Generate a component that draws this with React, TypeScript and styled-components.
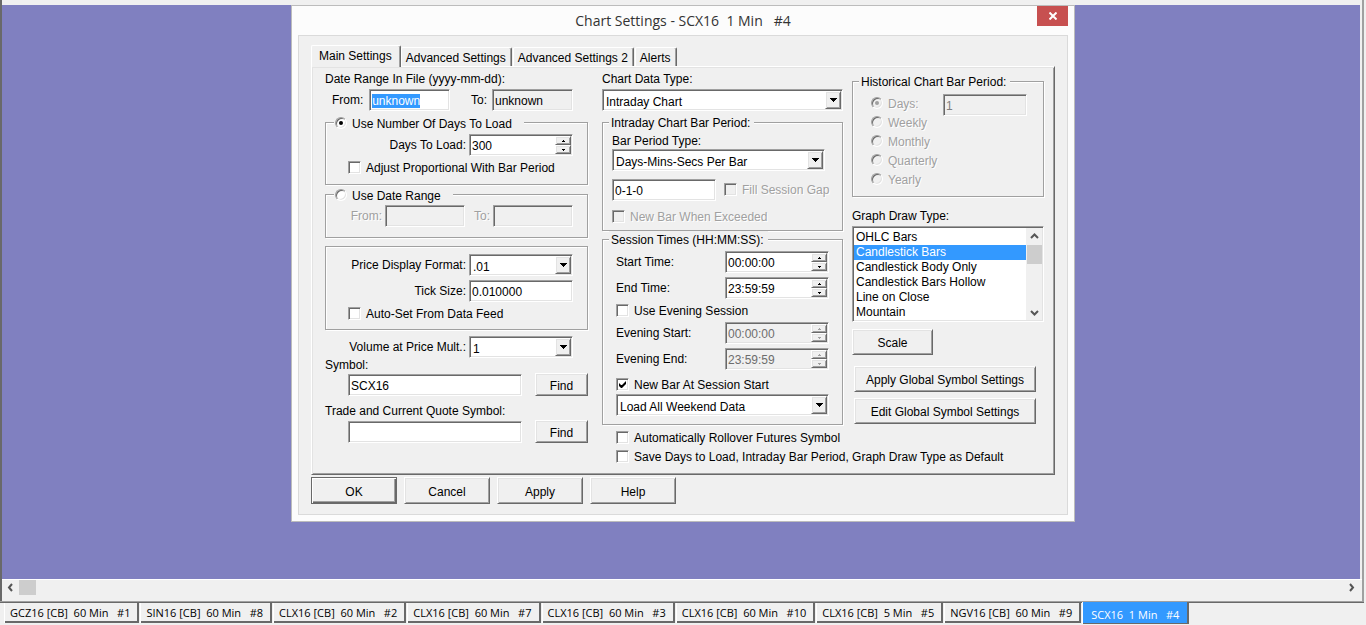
import React, { useEffect, useRef } from "react";
import styled, { createGlobalStyle, css } from "styled-components";

const face = "#f0f0f0";
const shade = "#a0a0a0";
const dark = "#696969";
const lite = "#e3e3e3";
const accent = "#3399ff";

const GlobalStyle = createGlobalStyle`
  *, *::before, *::after { box-sizing: border-box; }
  html, body { margin: 0; padding: 0; background: ${face}; }
  body, button, input, select {
    font-family: "Liberation Sans", Arial, sans-serif;
    font-size: 12px;
    line-height: 14px;
    color: #000;
  }
  ::selection { background: ${accent}; color: #fff; }
`;

const sunken = css`
  border: 1px solid;
  border-color: ${shade} #fff #fff ${shade};
  box-shadow: inset 1px 1px ${dark}, inset -1px -1px ${lite};
`;

const raised = css`
  border: 1px solid;
  border-color: #fff ${dark} ${dark} #fff;
  box-shadow: inset 1px 1px ${lite}, inset -1px -1px ${shade};
`;

const engraved = css`
  color: ${shade};
  text-shadow: 1px 1px #fff;
`;

/* Application frame */

const Frame = styled.div`
  display: flex;
  flex-direction: column;
  min-height: 100vh;
  background: ${face};
`;

const Client = styled.div`
  flex: 1;
  display: flex;
  flex-direction: column;
  margin-right: 2px;
  border-left: 2px solid ${dark};
  border-right: 2px solid ${shade};
`;

const Workspace = styled.main`
  flex: 1;
  display: flex;
  justify-content: center;
  align-items: flex-start;
  margin-top: 5px;
  margin-right: 2px;
  padding: 0 0 56px 4px;
  background: #8080c0;
`;

const ScrollStrip = styled.div`
  display: flex;
  align-items: center;
  height: 23px;
  padding: 0 6px 7px 4px;
  border-top: 1px solid #fff;
`;

const ScrollArrow = styled.button`
  display: flex;
  align-items: center;
  justify-content: center;
  width: 9px;
  height: 15px;
  padding: 0;
  border: 0;
  background: none;
`;

const ScrollThumb = styled.div`
  width: 17px;
  height: 15px;
  margin-left: 4px;
  margin-right: auto;
  background: #cdcdcd;
`;

const TabStrip = styled.nav`
  display: flex;
  align-items: flex-start;
  height: 23px;
  margin-right: 2px;
  padding-left: 5px;
  border-top: 1px solid ${dark};
  box-shadow: 0 -1px ${shade};
`;

const ChartTab = styled.button<{ $active?: boolean }>`
  flex: none;
  height: 20px;
  margin-right: 2px;
  padding: 1px 7px 0 5px;
  border: solid;
  border-width: 0 2px 2px 0;
  border-color: ${face} ${dark} ${dark} #fff;
  background: ${face};
  box-shadow: -1px 0 #fff;
  font-family: "Open Sans", "Noto Sans", sans-serif;
  font-size: 11px;
  line-height: 17px;
  white-space: pre;
  ${(p) =>
    p.$active &&
    css`
      height: 22px;
      margin-top: -1px;
      padding: 4px 8px 0;
      border-width: 0 2px 1px 0;
      background: ${accent};
      color: #fff;
    `}
`;

/* Dialog */

const Dialog = styled.section`
  width: 784px;
  max-width: 100%;
  padding: 0 6px 6px;
  border: 1px solid #bcbcbc;
  background: #fcfcfc;
`;

const TitleBar = styled.header`
  display: grid;
  grid-template-columns: 31px 1fr 31px;
  height: 29px;
`;

const Title = styled.h1`
  grid-column: 2;
  margin: 0;
  font-family: "Open Sans", "Noto Sans", sans-serif;
  font-size: 14px;
  font-weight: 400;
  line-height: 29px;
  text-align: center;
  white-space: pre;
  color: #333;
`;

const CloseButton = styled.button`
  display: flex;
  align-items: center;
  justify-content: center;
  width: 31px;
  height: 20px;
  padding: 0;
  border: 0;
  background: #c75050;
`;

const DialogBody = styled.form`
  padding: 9px 12px 10px;
  border: 1px solid #dadada;
  background: ${face};
`;

const TabList = styled.div`
  display: flex;
  align-items: flex-end;
`;

const Tab = styled.button<{ $active?: boolean }>`
  height: 19px;
  margin-right: 1px;
  padding: 2px 5px 0 4px;
  border: 1px solid;
  border-color: #fff ${dark} transparent #fff;
  border-bottom: 0;
  border-radius: 2px 2px 0 0;
  background: ${face};
  box-shadow: inset -1px 0 ${shade};
  ${(p) =>
    p.$active &&
    css`
      z-index: 1;
      height: 22px;
      margin-bottom: -1px;
      margin-right: 0;
      padding: 0 8px 2px 7px;
    `}
`;

const Panel = styled.div`
  display: grid;
  grid-template-columns: 268px 241px 192px;
  column-gap: 9px;
  padding: 5px 10px 10px 13px;
  ${raised}
`;

const Column = styled.div<{ $wide?: boolean; $tall?: boolean; $indent?: boolean }>`
  display: flex;
  flex-direction: column;
  align-items: stretch;
  grid-row: ${(p) => (p.$tall ? "1 / span 2" : "auto")};
  grid-column: ${(p) => (p.$wide ? "2 / span 2" : "auto")};
  padding-right: ${(p) => (p.$tall ? "5px" : "0")};
  padding-left: ${(p) => (p.$indent ? "14px" : "0")};
`;

const Row = styled.div<{ $top?: number; $left?: number; $right?: number; $align?: string }>`
  display: flex;
  align-items: center;
  justify-content: ${(p) => p.$align || "flex-start"};
  margin-top: ${(p) => p.$top || 0}px;
  padding-left: ${(p) => p.$left || 0}px;
  padding-right: ${(p) => p.$right || 0}px;
`;

const Label = styled.label<{ $top?: number; $gap?: number; $grow?: boolean; $off?: boolean }>`
  flex: ${(p) => (p.$grow ? 1 : "none")};
  margin-top: ${(p) => p.$top || 0}px;
  margin-right: ${(p) => p.$gap || 0}px;
  white-space: nowrap;
  ${(p) => p.$off && engraved}
`;

const Group = styled.fieldset<{ $top?: number }>`
  min-width: 0;
  margin: ${(p) => p.$top || 0}px 0 0;
  padding: 0;
  border: 1px solid ${shade};
  box-shadow: 1px 1px #fff, inset 1px 1px #fff;
`;

const GroupBody = styled.div<{ $pad: string }>`
  padding: ${(p) => p.$pad};
`;

const Legend = styled.legend<{ $radio?: boolean }>`
  margin-left: ${(p) => (p.$radio ? "8px" : "6px")};
  padding: ${(p) => (p.$radio ? "3px 12px 0 1px" : "2px 4px 0 2px")};
  background: ${face};
  line-height: 15px;
  white-space: nowrap;
`;

const TextBox = styled.input<{ $w: number }>`
  width: ${(p) => p.$w}px;
  height: 22px;
  padding: 3px 2px 1px;
  background: ${(p) => (p.disabled || p.readOnly ? face : "#fff")};
  border-radius: 0;
  outline: 0;
  ${sunken}
  &:disabled { color: #808080; }
`;

const TopBox = styled(TextBox)`
  align-self: flex-start;
`;

const ComboFrame = styled.div<{ $w?: number }>`
  position: relative;
  flex: none;
  width: ${(p) => (p.$w ? p.$w + "px" : "100%")};
  height: 22px;
  padding: 1px;
  background: #fff;
  ${sunken}
`;

const ComboSelect = styled.select`
  appearance: none;
  display: block;
  width: 100%;
  height: 18px;
  padding: 3px 18px 0 2px;
  border: 0;
  outline: 0;
  background: transparent;
`;

const ComboArrow = styled.span`
  position: absolute;
  top: 1px;
  right: 1px;
  display: flex;
  align-items: center;
  justify-content: center;
  width: 16px;
  height: 18px;
  background: ${face};
  pointer-events: none;
  ${raised}
`;

const SpinFrame = styled.div<{ $off?: boolean }>`
  display: flex;
  flex: none;
  width: 104px;
  height: 22px;
  padding: 1px;
  background: ${(p) => (p.$off ? face : "#fff")};
  ${sunken}
`;

const SpinInput = styled.input`
  flex: 1;
  min-width: 0;
  padding: 1px 1px 0;
  border: 0;
  outline: 0;
  background: transparent;
  &:disabled { color: #6d6d6d; }
`;

const SpinButtons = styled.div`
  display: grid;
  grid-template-rows: 1fr 1fr;
  width: 16px;
`;

const SpinButton = styled.button`
  display: flex;
  align-items: center;
  justify-content: center;
  padding: 0;
  background: ${face};
  ${raised}
`;

const Choice = styled.label<{ $top?: number; $left?: number; $off?: boolean }>`
  display: flex;
  align-items: center;
  gap: 5px;
  margin-top: ${(p) => p.$top || 0}px;
  margin-left: ${(p) => p.$left || 0}px;
  line-height: 14px;
  white-space: nowrap;
  ${(p) => p.$off && engraved}
`;

const CheckInput = styled.input`
  appearance: none;
  flex: none;
  width: 13px;
  height: 13px;
  margin: 0 0 1px;
  background: #fff;
  ${sunken}
  &:disabled { background: ${face}; }
  &:checked::after {
    content: "";
    display: block;
    width: 7px;
    height: 7px;
    margin: 2px;
    background: #000;
    clip-path: polygon(0 2px, 2px 4px, 3px 4px, 7px 0, 7px 3px, 3px 7px, 2px 7px, 0 5px);
  }
`;

const RadioInput = styled.input`
  appearance: none;
  flex: none;
  display: grid;
  place-items: center;
  width: 12px;
  height: 12px;
  margin: 0 0 2px;
  border-radius: 50%;
  background: #fff;
  ${sunken}
  &:disabled { background: ${face}; }
  &:checked::after {
    content: "";
    width: 4px;
    height: 4px;
    border-radius: 50%;
    background: #000;
  }
  &:checked:disabled::after { background: ${shade}; }
`;

const PeriodRow = styled(Choice)`
  height: 19px;
`;

const PushButton = styled.button<{ $w: number; $h?: number; $primary?: boolean }>`
  flex: none;
  width: ${(p) => p.$w}px;
  height: ${(p) => p.$h || 27}px;
  padding: 2px 0 0;
  background: ${face};
  ${raised}
  ${(p) =>
    p.$primary &&
    css`
      border-color: ${dark};
      box-shadow: inset 1px 1px #fff, inset -1px -1px ${dark}, inset -2px -2px ${shade};
    `}
`;

const ButtonStack = styled.div`
  display: flex;
  flex-direction: column;
  gap: 6px;
  margin: 11px 0 0 2px;
`;

const ListFrame = styled.div`
  display: flex;
  height: 96px;
  margin-top: 3px;
  padding: 1px;
  background: #fff;
  ${sunken}
`;

const ListBox = styled.select`
  flex: 1;
  height: 92px;
  padding: 2px 0 0;
  border: 0;
  outline: 0;
  background: #fff;
  overflow: hidden;
  scrollbar-width: none;
`;

const ListOption = styled.option`
  min-height: 15px;
  height: 15px;
  padding: 0 0 0 2px;
  line-height: 15px;
  &:checked {
    background: linear-gradient(${accent}, ${accent});
    -webkit-text-fill-color: #fff;
  }
`;

const ListScroll = styled.div`
  display: flex;
  flex-direction: column;
  align-items: center;
  width: 16px;
  background: ${face};
`;

const ListThumb = styled.div`
  width: 15px;
  height: 19px;
  margin: 1px 0 auto;
  background: #cdcdcd;
`;

const ListArrow = styled(ScrollArrow)`
  width: 15px;
  height: 16px;
`;

const Footer = styled.footer`
  display: flex;
  gap: 7px;
  margin-top: 2px;
`;

type ChevronDir = "left" | "right" | "up" | "down";
const chevrons: Record<ChevronDir, string> = {
  left: "M6 1 3 4.500 6 8",
  right: "M3 1 6 4.500 3 8",
  up: "M1 6 4.500 2.500 8 6",
  down: "M1 3 4.500 6.500 8 3",
};

function Chevron({ dir }: { dir: ChevronDir }) {
  return (
    <svg width="9" height="9" viewBox="0 0 9 9" fill="none" stroke="#555" strokeWidth="2">
      <path d={chevrons[dir]} />
    </svg>
  );
}

function Combo({ id, w, value }: { id: string; w?: number; value: string }) {
  return (
    <ComboFrame $w={w}>
      <ComboSelect id={id}>
        <option>{value}</option>
      </ComboSelect>
      <ComboArrow>
        <svg width="7" height="4" viewBox="0 0 7 4" shapeRendering="crispEdges">
          <path d="M0 0H7V1H6V2H5V3H4V4H3V3H2V2H1V1H0Z" fill="#000" />
        </svg>
      </ComboArrow>
    </ComboFrame>
  );
}

function Spinner({ id, value, off }: { id: string; value: string; off?: boolean }) {
  const fill = off ? shade : "#000";
  return (
    <SpinFrame $off={off}>
      <SpinInput id={id} defaultValue={value} disabled={off} />
      <SpinButtons>
        <SpinButton type="button" aria-label="Increase" disabled={off}>
          <svg width="3" height="2" viewBox="0 0 3 2" shapeRendering="crispEdges">
            <path d="M1 0H2V1H3V2H0V1H1Z" fill={fill} />
          </svg>
        </SpinButton>
        <SpinButton type="button" aria-label="Decrease" disabled={off}>
          <svg width="3" height="2" viewBox="0 0 3 2" shapeRendering="crispEdges">
            <path d="M0 0H3V1H2V2H1V1H0Z" fill={fill} />
          </svg>
        </SpinButton>
      </SpinButtons>
    </SpinFrame>
  );
}

function Check(props: { text: string; top?: number; left?: number; on?: boolean; off?: boolean }) {
  return (
    <Choice $top={props.top} $left={props.left} $off={props.off}>
      <CheckInput type="checkbox" defaultChecked={props.on} disabled={props.off} />
      {props.text}
    </Choice>
  );
}

const chartTabs = [
  "GCZ16 [CB]  60 Min   #1",
  "SIN16 [CB]  60 Min   #8",
  "CLX16 [CB]  60 Min   #2",
  "CLX16 [CB]  60 Min   #7",
  "CLX16 [CB]  60 Min   #3",
  "CLX16 [CB]  60 Min   #10",
  "CLX16 [CB]  5 Min   #5",
  "NGV16 [CB]  60 Min   #9",
  "SCX16  1 Min   #4",
];

const drawTypes = [
  "OHLC Bars",
  "Candlestick Bars",
  "Candlestick Body Only",
  "Candlestick Bars Hollow",
  "Line on Close",
  "Mountain",
];

const periods = ["Days:", "Weekly", "Monthly", "Quarterly", "Yearly"];

function LoadColumn() {
  const fromRef = useRef<HTMLInputElement>(null);
  useEffect(() => {
    fromRef.current?.focus();
    fromRef.current?.select();
  }, []);
  return (
    <Column $tall>
      <Label htmlFor="file-from">Date Range In File (yyyy-mm-dd):</Label>
      <Row $top={3} $left={7} $right={15} $align="space-between">
        <Label htmlFor="file-from">From:</Label>
        <TextBox ref={fromRef} id="file-from" $w={81} defaultValue="unknown" />
        <Row $left={15}>
          <Label htmlFor="file-to" $gap={5}>To:</Label>
          <TextBox id="file-to" $w={81} defaultValue="unknown" readOnly />
        </Row>
      </Row>
      <Group $top={3}>
        <Legend $radio>
          <Choice>
            <RadioInput type="radio" name="range" defaultChecked />
            Use Number Of Days To Load
          </Choice>
        </Legend>
        <GroupBody $pad="3px 14px 9px 22px">
          <Row $align="flex-end">
            <Label htmlFor="days" $gap={3}>Days To Load:</Label>
            <Spinner id="days" value="300" />
          </Row>
          <Check top={5} text="Adjust Proportional With Bar Period" />
        </GroupBody>
      </Group>
      <Group $top={1}>
        <Legend $radio>
          <Choice>
            <RadioInput type="radio" name="range" />
            Use Date Range
          </Choice>
        </Legend>
        <GroupBody $pad="2px 14px 10px 22px">
          <Row $align="flex-end">
            <Label htmlFor="range-from" $gap={3} $off>From:</Label>
            <TextBox id="range-from" $w={80} disabled />
            <Row $left={9}>
              <Label htmlFor="range-to" $gap={3} $off>To:</Label>
              <TextBox id="range-to" $w={80} disabled />
            </Row>
          </Row>
        </GroupBody>
      </Group>
      <Group $top={8}>
        <GroupBody $pad="7px 14px 8px 22px">
          <Row $align="flex-end">
            <Label htmlFor="price-format" $gap={3}>Price Display Format:</Label>
            <Combo id="price-format" w={104} value=".01" />
          </Row>
          <Row $top={4} $align="flex-end">
            <Label htmlFor="tick" $gap={3}>Tick Size:</Label>
            <TextBox id="tick" $w={104} defaultValue="0.010000" />
          </Row>
          <Check top={5} text="Auto-Set From Data Feed" />
        </GroupBody>
      </Group>
      <Row $top={6} $right={15} $align="flex-end">
        <Label htmlFor="volume" $gap={3}>Volume at Price Mult.:</Label>
        <Combo id="volume" w={104} value="1" />
      </Row>
      <Label htmlFor="symbol">Symbol:</Label>
      <Row $top={1} $left={23} $align="space-between">
        <TextBox id="symbol" $w={174} defaultValue="SCX16" />
        <PushButton type="button" $w={53} $h={23}>Find</PushButton>
      </Row>
      <Label htmlFor="trade" $top={8}>Trade and Current Quote Symbol:</Label>
      <Row $top={2} $left={23} $align="space-between">
        <TextBox id="trade" $w={174} />
        <PushButton type="button" $w={53} $h={23}>Find</PushButton>
      </Row>
    </Column>
  );
}

function SessionColumn() {
  return (
    <Column>
      <Label htmlFor="data-type">Chart Data Type:</Label>
      <Row $top={3}>
        <Combo id="data-type" value="Intraday Chart" />
      </Row>
      <Group $top={3}>
        <Legend>Intraday Chart Bar Period:</Legend>
        <GroupBody $pad="3px 9px 6px 9px">
          <Row>
            <Label htmlFor="period-type">Bar Period Type:</Label>
          </Row>
          <Row $top={1}>
            <Combo id="period-type" w={213} value="Days-Mins-Secs Per Bar" />
          </Row>
          <Row $top={8}>
            <TextBox $w={104} defaultValue="0-1-0" aria-label="Bar period" />
            <Check left={8} text="Fill Session Gap" off />
          </Row>
          <Check top={9} text="New Bar When Exceeded" off />
        </GroupBody>
      </Group>
      <Group>
        <Legend>Session Times (HH:MM:SS):</Legend>
        <GroupBody $pad="3px 13px 8px 13px">
          <Row>
            <Label htmlFor="start" $grow>Start Time:</Label>
            <Spinner id="start" value="00:00:00" />
          </Row>
          <Row $top={4}>
            <Label htmlFor="end" $grow>End Time:</Label>
            <Spinner id="end" value="23:59:59" />
          </Row>
          <Check top={5} text="Use Evening Session" />
          <Row $top={4}>
            <Label htmlFor="ev-start" $grow>Evening Start:</Label>
            <Spinner id="ev-start" value="00:00:00" off />
          </Row>
          <Row $top={4}>
            <Label htmlFor="ev-end" $grow>Evening End:</Label>
            <Spinner id="ev-end" value="23:59:59" off />
          </Row>
          <Check top={8} text="New Bar At Session Start" on />
          <Row $top={2}>
            <Combo id="weekend" value="Load All Weekend Data" />
          </Row>
        </GroupBody>
      </Group>
    </Column>
  );
}

function DrawColumn() {
  return (
    <Column>
      <Group $top={1}>
        <Legend>Historical Chart Bar Period:</Legend>
        <GroupBody $pad="4px 16px 7px 18px">
          <Row $align="space-between">
            <div>
              {periods.map((p, i) => (
                <PeriodRow key={p} $off>
                  <RadioInput type="radio" name="period" defaultChecked={i === 0} disabled />
                  {p}
                </PeriodRow>
              ))}
            </div>
            <TopBox $w={84} defaultValue="1" disabled aria-label="Days" />
          </Row>
        </GroupBody>
      </Group>
      <Label htmlFor="draw" $top={12}>Graph Draw Type:</Label>
      <ListFrame>
        <ListBox id="draw" size={6} defaultValue="Candlestick Bars">
          {drawTypes.map((t) => (
            <ListOption key={t}>{t}</ListOption>
          ))}
        </ListBox>
        <ListScroll>
          <ListArrow type="button" aria-label="Scroll up"><Chevron dir="up" /></ListArrow>
          <ListThumb />
          <ListArrow type="button" aria-label="Scroll down"><Chevron dir="down" /></ListArrow>
        </ListScroll>
      </ListFrame>
      <Row $top={7}>
        <PushButton type="button" $w={81} $h={26}>Scale</PushButton>
      </Row>
      <ButtonStack>
        <PushButton type="button" $w={182} $h={26}>Apply Global Symbol Settings</PushButton>
        <PushButton type="button" $w={182} $h={26}>Edit Global Symbol Settings</PushButton>
      </ButtonStack>
    </Column>
  );
}

export default function App() {
  return (
    <Frame>
      <GlobalStyle />
      <Client>
        <Workspace>
          <Dialog role="dialog" aria-labelledby="dialog-title">
            <TitleBar>
              <Title id="dialog-title">{"Chart Settings - SCX16  1 Min   #4"}</Title>
              <CloseButton type="button" aria-label="Close">
                <svg width="8" height="8" viewBox="0 0 8 8" stroke="#fff" strokeWidth="2">
                  <path d="M0.500 0.500 7.500 7.500M7.500 0.500 0.500 7.500" />
                </svg>
              </CloseButton>
            </TitleBar>
            <DialogBody onSubmit={(e) => e.preventDefault()}>
              <TabList role="tablist">
                <Tab type="button" role="tab" aria-selected $active>Main Settings</Tab>
                <Tab type="button" role="tab">Advanced Settings</Tab>
                <Tab type="button" role="tab">Advanced Settings 2</Tab>
                <Tab type="button" role="tab">Alerts</Tab>
              </TabList>
              <Panel>
                <LoadColumn />
                <SessionColumn />
                <DrawColumn />
                <Column $wide $indent>
                  <Check top={6} text="Automatically Rollover Futures Symbol" />
                  <Check top={5} text="Save Days to Load, Intraday Bar Period, Graph Draw Type as Default" />
                </Column>
              </Panel>
              <Footer>
                <PushButton type="submit" $w={86} $primary>OK</PushButton>
                <PushButton type="button" $w={86}>Cancel</PushButton>
                <PushButton type="button" $w={86}>Apply</PushButton>
                <PushButton type="button" $w={86}>Help</PushButton>
              </Footer>
            </DialogBody>
          </Dialog>
        </Workspace>
        <ScrollStrip>
          <ScrollArrow type="button" aria-label="Scroll left"><Chevron dir="left" /></ScrollArrow>
          <ScrollThumb />
          <ScrollArrow type="button" aria-label="Scroll right"><Chevron dir="right" /></ScrollArrow>
        </ScrollStrip>
      </Client>
      <TabStrip>
        {chartTabs.map((t, i) => (
          <ChartTab key={t} type="button" $active={i === chartTabs.length - 1}>{t}</ChartTab>
        ))}
      </TabStrip>
    </Frame>
  );
}
